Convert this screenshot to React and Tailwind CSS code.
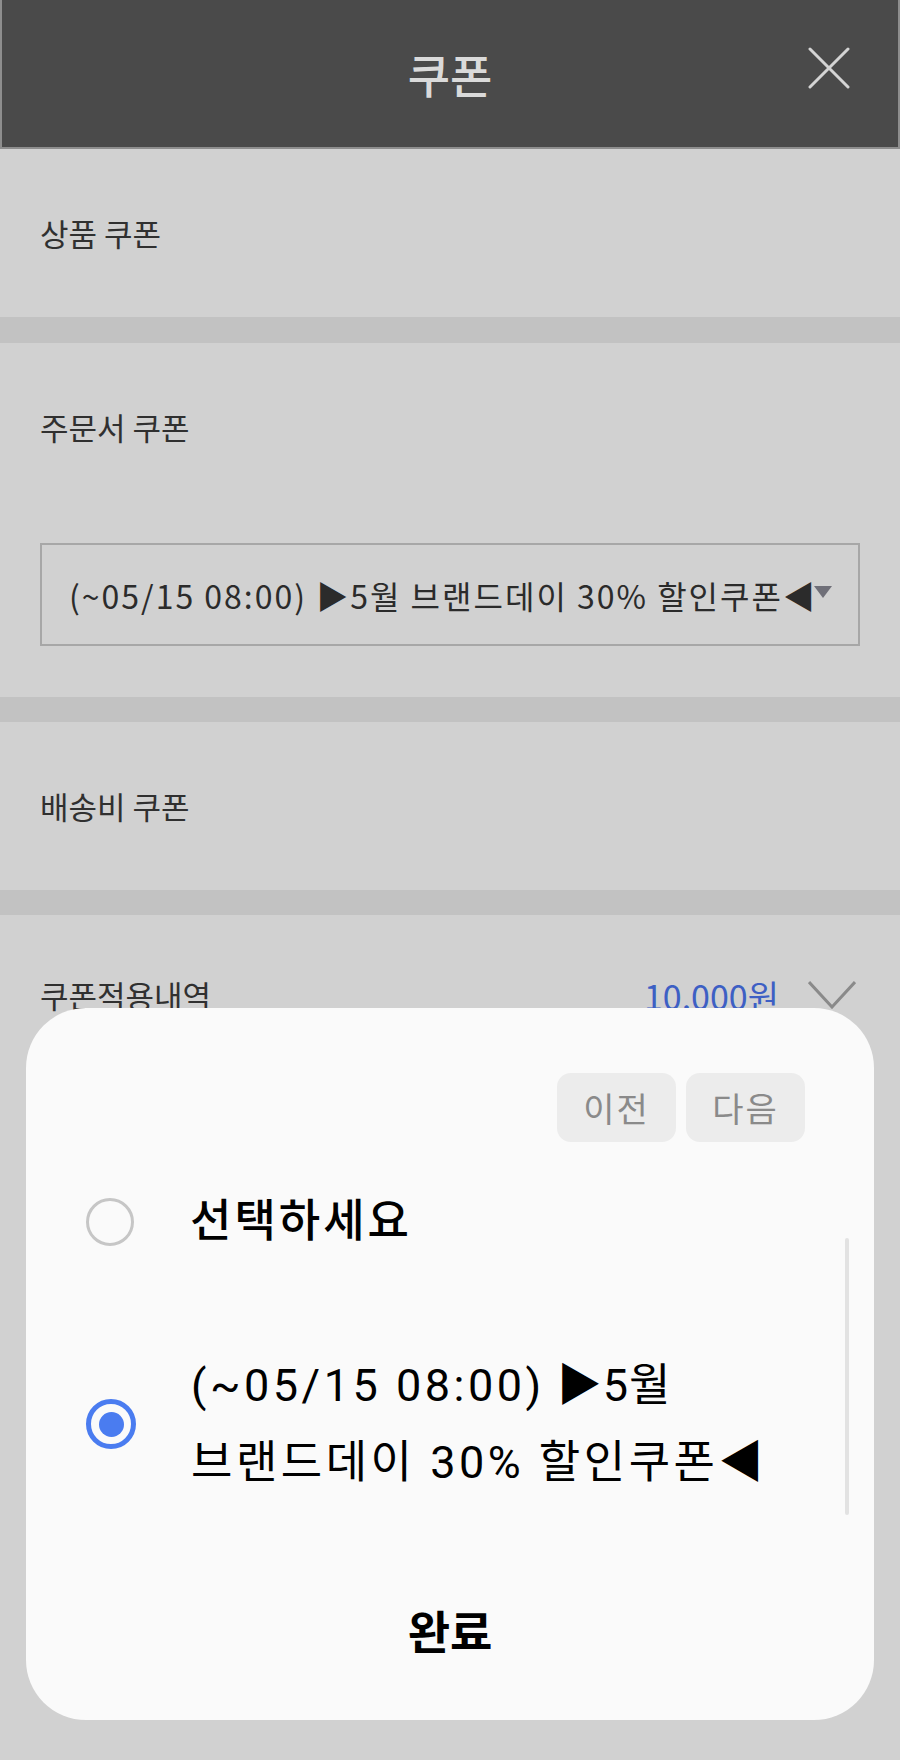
import React from 'react';

const Radio = ({ checked }) =>
    checked ? (
        <span className="flex h-[50px] w-[50px] shrink-0 items-center justify-center rounded-full border-[5px] border-[#4a7cf0]">
            <span className="h-[25px] w-[25px] rounded-full bg-[#4a7cf0]" />
        </span>
    ) : (
        <span className="h-[48px] w-[48px] shrink-0 rounded-full border-[3px] border-[#c6c6c6]" />
    );

export default function App() {
    return (
        <div className="relative min-h-[1760px] w-[900px] bg-[#d1d1d1] font-['Noto_Sans_CJK_KR',sans-serif] text-[#303030]">
            {/* header */}
            <header className="grid h-[149px] grid-cols-[1fr_auto_1fr] items-center border-x-2 border-b-2 border-[#8e8e8e] bg-[#4a4a4a]">
                <span />
                <h1 className="mb-[2px] text-[46px] font-medium leading-none text-[#dadada]">쿠폰</h1>
                <button type="button" className="mb-[12px] justify-self-end pr-[48px]">
                    <svg width="42" height="42" viewBox="0 0 42 42" stroke="#d4d4d4" strokeWidth="3" strokeLinecap="round">
                        <path d="M2 2L40 40M40 2L2 40" />
                    </svg>
                </button>
            </header>

            <section className="flex h-[168px] items-center pl-[40px] text-[31px]">상품 쿠폰</section>
            <div className="h-[26px] bg-[#c2c2c2]" />

            <section className="pb-[51px]">
                <div className="flex h-[168px] items-center pl-[40px] text-[31px]">주문서 쿠폰</div>
                <div className="mx-[40px] mt-[32px] flex h-[103px] items-center border-2 border-[#a7a7a7] pl-[27px] text-[32px] text-[#2b2b2b]">
                    <span className="whitespace-nowrap tracking-[2px]">(~05/15 08:00) ▶5월 브랜드데이 30% 할인쿠폰◀</span>
                    <svg className="ml-[-3px] mt-[-6px]" width="18" height="12" viewBox="0 0 18 12">
                        <polygon points="0,0 18,0 9,12" fill="#6f6f78" />
                    </svg>
                </div>
            </section>
            <div className="h-[25px] bg-[#c2c2c2]" />

            <section className="flex h-[168px] items-center pl-[40px] text-[31px]">배송비 쿠폰</section>
            <div className="h-[25px] bg-[#c2c2c2]" />

            <section className="flex h-[160px] items-center pl-[40px] pr-[44px] text-[31px]">
                <span>쿠폰적용내역</span>
                <span className="ml-auto text-[34px] text-[#3d5fc4]">10.000원</span>
                <svg className="ml-[29px]" width="48" height="28" viewBox="0 0 48 28" fill="none" stroke="#8a8a8a" strokeWidth="3">
                    <path d="M1 1L24 26L47 1" />
                </svg>
            </section>

            {/* bottom sheet */}
            <div className="absolute left-[26px] top-[1008px] flex h-[712px] w-[848px] flex-col rounded-[60px] bg-[#fafafa] font-['Roboto','Noto_Sans_CJK_KR',sans-serif]">
                <div className="flex justify-end gap-[10px] pr-[69px] pt-[65px]">
                    <button type="button" className="h-[69px] w-[119px] rounded-[14px] bg-[#ececec] font-['Noto_Sans_CJK_KR',sans-serif] text-[34px] tracking-[2px] text-[#8a8a8a]">이전</button>
                    <button type="button" className="h-[69px] w-[119px] rounded-[14px] bg-[#ececec] font-['Noto_Sans_CJK_KR',sans-serif] text-[34px] tracking-[2px] text-[#8a8a8a]">다음</button>
                </div>

                <div className="mt-[41px] flex">
                    <div className="flex flex-1 flex-col pl-[60px]">
                        <label className="flex items-center">
                            <Radio />
                            <span className="ml-[56px] text-[45px] font-medium leading-[77px] tracking-[3px] text-black">선택하세요</span>
                        </label>
                        <label className="mt-[87px] flex items-center">
                            <Radio checked />
                            <div className="ml-[55px] flex flex-col text-[45px] leading-[77px] text-black">
                                <div className="flex whitespace-nowrap">
                                    <span className="tracking-[3.5px]">(~05/15 08:00)</span>
                                    <span className="ml-[12px] tracking-[1px]">▶5월</span>
                                </div>
                                <div className="whitespace-nowrap tracking-[3.5px]">브랜드데이 30% 할인쿠폰◀</div>
                            </div>
                        </label>
                    </div>
                    <div className="mr-[25px] mt-[55px] h-[277px] w-[4px] rounded-full bg-[#e2e2e2]" />
                </div>

                <button type="button" className="mt-[70px] text-center font-['Noto_Sans_CJK_KR',sans-serif] text-[46px] font-bold leading-[88px] text-black">완료</button>
            </div>
        </div>
    );
}
